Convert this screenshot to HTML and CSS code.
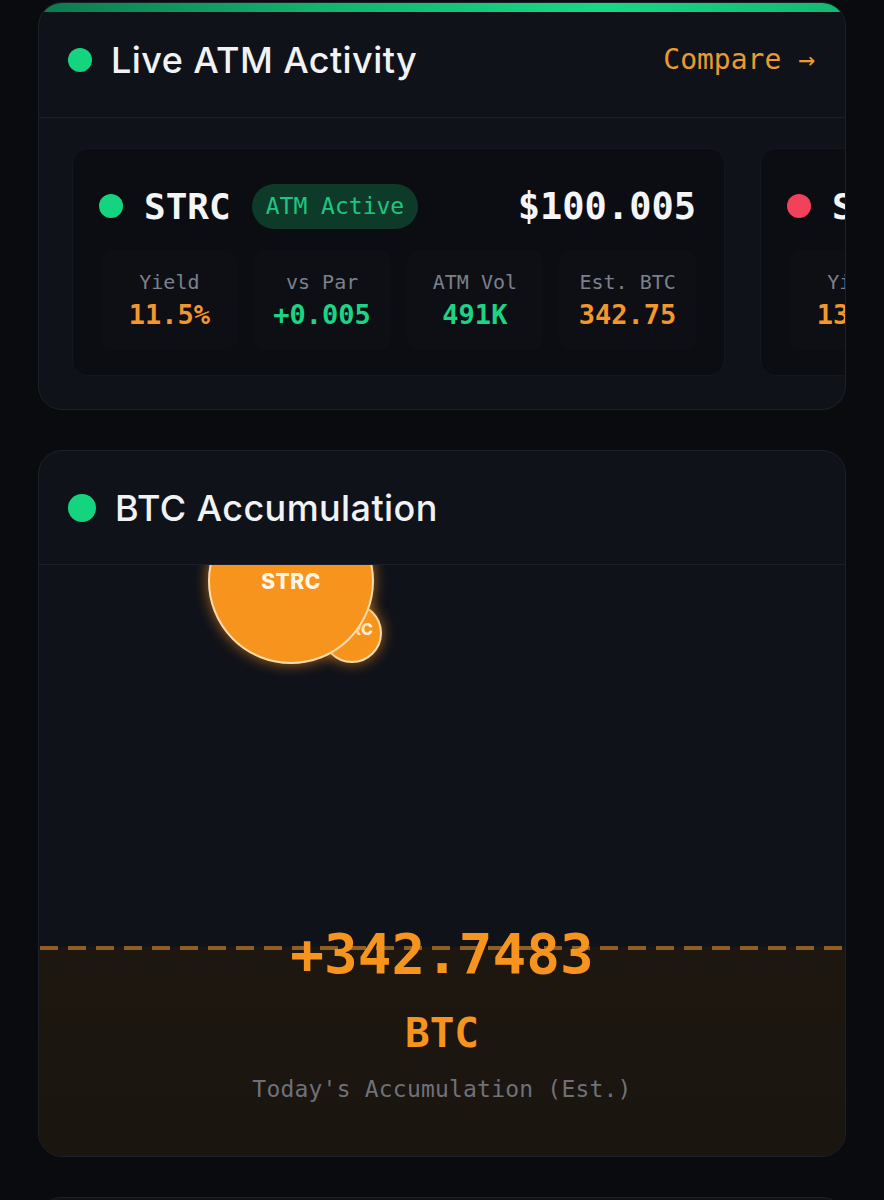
FILE: index.html
```html
<!DOCTYPE html>
<html lang="en">
<head>
<meta charset="utf-8">
<title>ATM Dashboard</title>
<link rel="stylesheet" href="styles.css">
</head>
<body>
<main class="page">
  <section class="panel">
    <div class="panel-bar"></div>
    <header class="panel-head">
      <span class="dot dot-green"></span>
      <h2 class="panel-title">Live ATM Activity</h2>
      <a class="compare">Compare →</a>
    </header>
    <div class="ticker-row">
      <article class="ticker">
        <div class="ticker-top">
          <span class="dot dot-green"></span>
          <span class="sym">STRC</span>
          <span class="badge">ATM Active</span>
          <span class="price">$100.005</span>
        </div>
        <div class="stats">
          <div class="stat"><span class="stat-label">Yield</span><span class="stat-val orange">11.5%</span></div>
          <div class="stat"><span class="stat-label">vs Par</span><span class="stat-val green">+0.005</span></div>
          <div class="stat"><span class="stat-label">ATM Vol</span><span class="stat-val green">491K</span></div>
          <div class="stat"><span class="stat-label">Est. BTC</span><span class="stat-val orange">342.75</span></div>
        </div>
      </article>
      <article class="ticker">
        <div class="ticker-top">
          <span class="dot dot-red"></span>
          <span class="sym">STRD</span>
          <span class="badge badge-off">ATM Idle</span>
          <span class="price">$78.410</span>
        </div>
        <div class="stats">
          <div class="stat"><span class="stat-label">Yield</span><span class="stat-val orange">13.0%</span></div>
          <div class="stat"><span class="stat-label">vs Par</span><span class="stat-val red">-21.59</span></div>
          <div class="stat"><span class="stat-label">ATM Vol</span><span class="stat-val green">0</span></div>
          <div class="stat"><span class="stat-label">Est. BTC</span><span class="stat-val orange">0.00</span></div>
        </div>
      </article>
    </div>
  </section>

  <section class="panel">
    <header class="panel-head panel-head-2">
      <span class="dot dot-green dot-lg"></span>
      <h2 class="panel-title">BTC Accumulation</h2>
    </header>
    <div class="accum">
      <div class="bubble bubble-sm"><span>STRC</span></div>
      <div class="bubble bubble-lg"><span>STRC</span></div>
      <div class="accum-fill"></div>
      <div class="accum-line"></div>
      <div class="accum-text">
        <div class="accum-num">+342.7483</div>
        <div class="accum-unit">BTC</div>
        <div class="accum-sub">Today's Accumulation (Est.)</div>
      </div>
    </div>
  </section>

  <section class="panel panel-next"></section>
</main>
</body>
</html>
```

FILE: styles.css
```css
* { box-sizing: border-box; margin: 0; padding: 0; }

html, body {
  background: #0a0b0f;
}

body {
  font-family: "Inter", "Noto Sans", sans-serif;
  color: #f2f3f5;
}

.page {
  padding: 2px 38px 0 38px;
  display: flex;
  flex-direction: column;
  gap: 40px;
}

.panel {
  background: #10121a;
  border: 1px solid #1d202a;
  border-radius: 24px;
  overflow: hidden;
  position: relative;
}

.panel-bar {
  height: 9px;
  background: linear-gradient(90deg, #0c7a4f 0%, #12b46e 35%, #17d985 70%, #12b872 100%);
}

.panel-head {
  height: 106px;
  display: flex;
  align-items: center;
  padding: 0 30px 10px 29px;
  border-bottom: 1px solid #1c1f29;
}

.panel-head-2 {
  height: 114px;
  padding-bottom: 0;
}

.dot {
  width: 24px;
  height: 24px;
  border-radius: 50%;
  flex-shrink: 0;
}
.dot-lg { width: 28px; height: 28px; }
.dot-green { background: #14d47f; }
.dot-red { background: #f2415a; }

.panel-title {
  font-size: 36px;
  font-weight: 550;
  letter-spacing: 0.4px;
  margin-left: 19px;
  color: #f1f2f4;
}

.compare {
  margin-left: auto;
  font-family: "DejaVu Sans Mono", monospace;
  font-size: 28px;
  color: #eb9a30;
}

.ticker-row {
  display: flex;
  gap: 35px;
  padding: 30px 0 33px 33px;
  overflow: hidden;
}

.ticker {
  flex-shrink: 0;
  width: 653px;
  height: 228px;
  background: #0c0d12;
  border: 1px solid #141720;
  border-radius: 16px;
  padding: 34px 28px 0 26px;
}

.ticker-top {
  display: flex;
  align-items: center;
  height: 46px;
}

.sym {
  font-family: "DejaVu Sans Mono", monospace;
  font-weight: 700;
  font-size: 36px;
  margin-left: 21px;
  color: #f4f5f7;
}

.badge {
  margin-left: 21px;
  height: 45px;
  padding: 0 14px;
  border-radius: 23px;
  background: #0e3a29;
  color: #1fc681;
  font-family: "DejaVu Sans Mono", monospace;
  font-size: 23px;
  display: flex;
  align-items: center;
}
.badge-off { background: #3a1419; color: #f2415a; }

.price {
  margin-left: auto;
  font-family: "DejaVu Sans Mono", monospace;
  font-weight: 700;
  font-size: 37px;
  color: #f4f5f7;
}

.stats {
  display: grid;
  grid-template-columns: repeat(4, 1fr);
  gap: 16px;
  margin-top: 21px;
  padding-left: 2px;
}

.stat {
  height: 100px;
  background: #0d0f14;
  border-radius: 12px;
  display: flex;
  flex-direction: column;
  align-items: center;
  justify-content: center;
  gap: 9px;
}

.stat-label {
  font-family: "DejaVu Sans Mono", monospace;
  font-size: 20px;
  color: #7c808b;
  line-height: 1;
}

.stat-val {
  font-family: "DejaVu Sans Mono", monospace;
  font-weight: 700;
  font-size: 27px;
  line-height: 1;
}
.orange { color: #f3972a; }
.green { color: #1ad585; }
.red { color: #f2415a; }

.accum {
  position: relative;
  height: 591px;
  padding-top: 361px;
  overflow: hidden;
}

.bubble {
  position: absolute;
  border-radius: 50%;
  background: #f7941d;
  border: 2.5px solid #f8dcae;
  box-shadow: 0 0 14px rgba(247, 148, 29, 0.65);
  display: flex;
  align-items: center;
  justify-content: center;
  font-weight: 800;
  color: #fff6e8;
}
.bubble-lg {
  left: 169px;
  top: -67px;
  width: 166px;
  height: 166px;
  font-size: 21px;
  letter-spacing: 0.5px;
}
.bubble-sm {
  left: 283px;
  top: 38px;
  width: 60px;
  height: 60px;
  font-size: 16px;
}
.bubble-sm span { margin-left: -2px; margin-top: -8px; }

.accum-fill {
  position: absolute;
  left: 0;
  right: 0;
  top: 382px;
  bottom: 0;
  background: linear-gradient(180deg, #1d1710 0%, #1a150f 100%);
}

.accum-line {
  position: absolute;
  left: 1px;
  right: 0;
  top: 381px;
  height: 4px;
  background: repeating-linear-gradient(90deg, #8e5e22 0 18px, transparent 18px 28px);
}

.accum-text {
  position: relative;
  display: flex;
  flex-direction: column;
  align-items: center;
  font-family: "DejaVu Sans Mono", monospace;
}

.accum-num {
  font-size: 56px;
  line-height: 56px;
  font-weight: 700;
  color: #f7941d;
}

.accum-unit {
  margin-top: 31px;
  font-size: 41px;
  line-height: 41px;
  font-weight: 700;
  color: #f7941d;
}

.accum-sub {
  margin-top: 24px;
  font-size: 23px;
  line-height: 23px;
  letter-spacing: 0.2px;
  color: #6f7179;
}

.panel-next {
  height: 60px;
}
```
